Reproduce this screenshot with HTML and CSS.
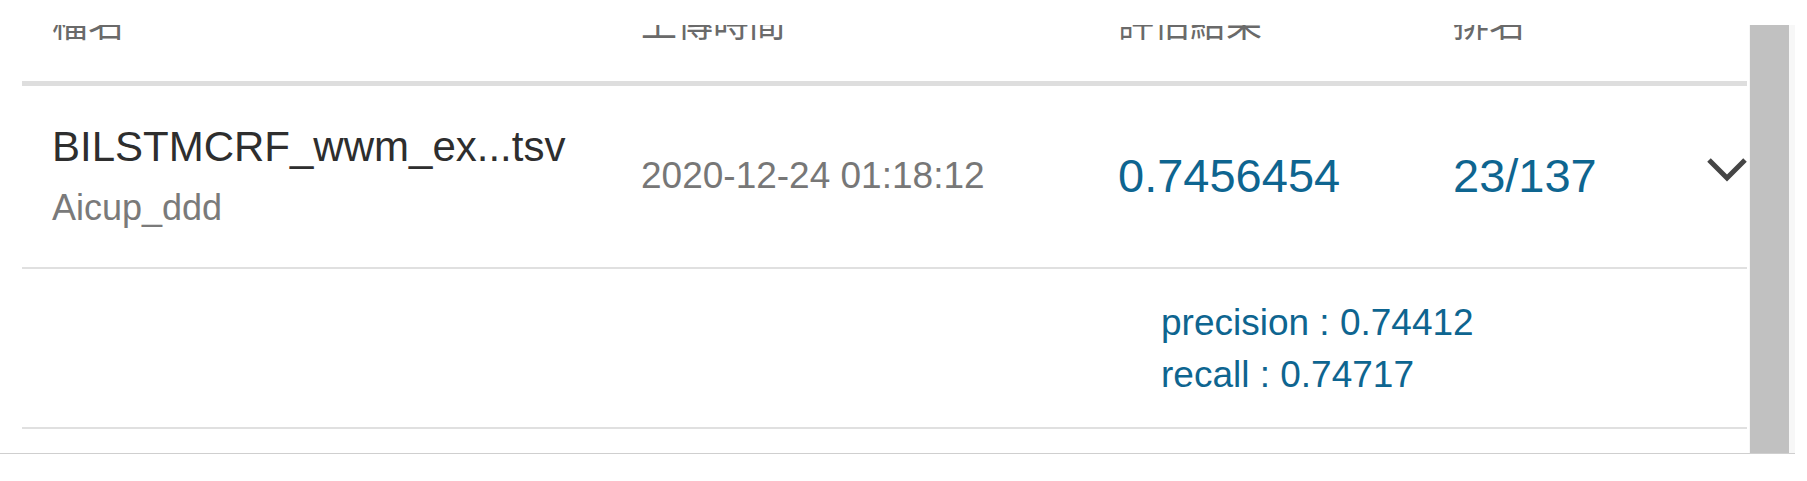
FILE: index.html
```html
<!DOCTYPE html>
<html lang="zh-Hant">
<head>
<meta charset="utf-8">
<title>上傳紀錄</title>
<link rel="stylesheet" href="styles.css">
</head>
<body>
<div class="page">
  <div class="scroller">
    <div class="viewport">
      <div class="table">
        <div class="grid head">
          <div class="hcell">檔名</div>
          <div class="hcell">上傳時間</div>
          <div class="hcell">評估結果</div>
          <div class="hcell">排名</div>
          <div></div>
        </div>
        <div class="grid row">
          <div class="name-cell">
            <div class="fname">BILSTMCRF_wwm_ex...tsv</div>
            <div class="team">Aicup_ddd</div>
          </div>
          <div class="date">2020-12-24 01:18:12</div>
          <div class="score">0.7456454</div>
          <div class="score">23/137</div>
          <div class="toggle">
            <svg class="chev" width="40" height="26" viewBox="0 0 40 26"><polyline points="2,3 20,21 38,3" fill="none" stroke="#454545" stroke-width="5"/></svg>
          </div>
        </div>
        <div class="grid detail">
          <div class="metrics">
            <div class="metric">precision : 0.74412</div>
            <div class="metric">recall : 0.74717</div>
          </div>
        </div>
      </div>
    </div>
    <div class="scrollbar"><div class="thumb"></div></div>
  </div>
</div>
</body>
</html>
```
FILE: styles.css
```css
html, body {
  margin: 0;
  padding: 0;
  background: #ffffff;
}

body {
  font-family: "Liberation Sans", Arial, "Noto Sans CJK TC", sans-serif;
}

.page {
  padding-top: 25px;
  padding-right: 12px;
  height: 481px;
  box-sizing: border-box;
}

.scroller {
  display: flex;
  height: 428px;
  border-bottom: 1px solid #cfcfcf;
  overflow: hidden;
}

.viewport {
  flex: 1;
  overflow: hidden;
  padding-left: 22px;
  padding-right: 2px;
}

.table {
  margin-top: -26px;
}

.grid {
  display: grid;
  grid-template-columns: 589px 477px 335px 1fr 40px;
  padding-left: 30px;
}

.head {
  height: 82px;
  border-bottom: 5px solid #dedede;
  box-sizing: content-box;
}

.hcell {
  font-family: "Noto Sans CJK TC", "Noto Sans CJK SC", sans-serif;
  font-size: 36px;
  line-height: 44px;
  color: #6a6a6a;
}

.row {
  align-items: center;
  padding-top: 36px;
  padding-bottom: 37px;
  border-bottom: 2px solid #e0e0e0;
}

.fname {
  font-size: 42px;
  line-height: 50px;
  color: #2e2e2e;
}

.team {
  margin-top: 14px;
  font-size: 36px;
  line-height: 44px;
  color: #7a7a7a;
}

.date {
  font-size: 37px;
  line-height: 44px;
  color: #777777;
}

.score {
  font-size: 47px;
  line-height: 56px;
  color: #0e6590;
}

.toggle {
  align-self: center;
  margin-top: -12px;
  display: flex;
}

.chev {
  display: block;
}

.detail {
  padding-top: 28px;
  padding-bottom: 26px;
  border-bottom: 2px solid #e0e0e0;
}

.metrics {
  grid-column: 3 / 5;
  padding-left: 43px;
}

.metric {
  font-size: 37px;
  line-height: 52px;
  color: #0e6590;
}

.scrollbar {
  width: 46px;
  background: #f7f7f7;
  display: flex;
}

.thumb {
  width: 39px;
  margin-left: 1px;
  background: #c1c1c1;
}
```
